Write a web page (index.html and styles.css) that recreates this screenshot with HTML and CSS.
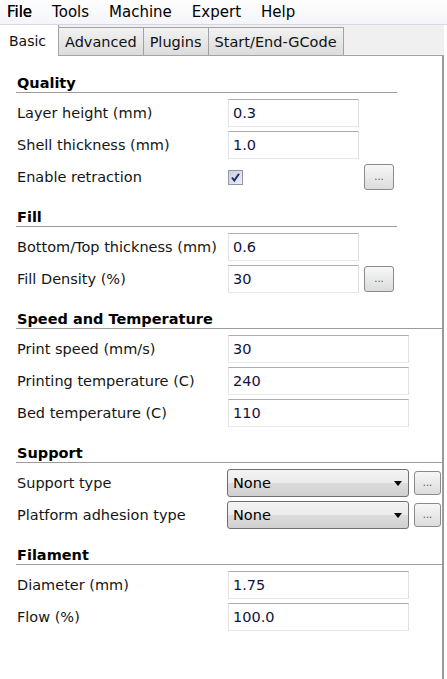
FILE: index.html
```html
<!DOCTYPE html>
<html>
<head>
<meta charset="utf-8">
<link rel="stylesheet" href="styles.css">
</head>
<body>
<div class="menubar">
  <span class="menu-item">File</span>
  <span class="menu-item">Tools</span>
  <span class="menu-item">Machine</span>
  <span class="menu-item">Expert</span>
  <span class="menu-item">Help</span>
</div>
<div class="tabstrip">
  <div class="tab active">Basic</div>
  <div class="tab">Advanced</div>
  <div class="tab">Plugins</div>
  <div class="tab">Start/End-GCode</div>
</div>
<div class="panel">
  <div class="section-head short"><span>Quality</span></div>
  <div class="rows">
    <div class="row"><span class="label">Layer height (mm)</span><div class="field narrow">0.3</div></div>
    <div class="row"><span class="label">Shell thickness (mm)</span><div class="field narrow">1.0</div></div>
    <div class="row"><span class="label">Enable retraction</span>
      <div class="check-cell">
        <svg class="checkbox" width="15" height="15" viewBox="0 0 15 15"><defs><linearGradient id="cb" x1="0" y1="0" x2="1" y2="1"><stop offset="0" stop-color="#c9cfdd"/><stop offset="1" stop-color="#eef0f6"/></linearGradient></defs><rect x="0.5" y="0.5" width="14" height="14" fill="url(#cb)" stroke="#8e96a8"/><path d="M4 7.5 L6.3 10.5 L11 3.8" fill="none" stroke="#1f2e6e" stroke-width="2"/></svg>
      </div>
      <div class="dots">...</div>
    </div>
  </div>

  <div class="section-head short"><span>Fill</span></div>
  <div class="rows">
    <div class="row"><span class="label">Bottom/Top thickness (mm)</span><div class="field narrow">0.6</div></div>
    <div class="row"><span class="label">Fill Density (%)</span><div class="field narrow">30</div><div class="dots">...</div></div>
  </div>

  <div class="section-head"><span>Speed and Temperature</span></div>
  <div class="rows">
    <div class="row"><span class="label">Print speed (mm/s)</span><div class="field wide">30</div></div>
    <div class="row"><span class="label">Printing temperature (C)</span><div class="field wide">240</div></div>
    <div class="row"><span class="label">Bed temperature (C)</span><div class="field wide">110</div></div>
  </div>

  <div class="section-head"><span>Support</span></div>
  <div class="rows">
    <div class="row"><span class="label">Support type</span><div class="select"><span>None</span><span class="arrow"></span></div><div class="dots small">...</div></div>
    <div class="row"><span class="label">Platform adhesion type</span><div class="select"><span>None</span><span class="arrow"></span></div><div class="dots small">...</div></div>
  </div>

  <div class="section-head"><span>Filament</span></div>
  <div class="rows">
    <div class="row"><span class="label">Diameter (mm)</span><div class="field wide">1.75</div></div>
    <div class="row"><span class="label">Flow (%)</span><div class="field wide">100.0</div></div>
  </div>
</div>
</body>
</html>
```

FILE: styles.css
```css
* { box-sizing: border-box; }
html, body {
  margin: 0;
  padding: 0;
}
body {
  width: 447px;
  height: 679px;
  overflow: hidden;
  background: #ffffff;
  font-family: "DejaVu Sans", sans-serif;
  font-size: 14.5px;
  color: #151515;
}
.menubar {
  height: 25px;
  display: flex;
  align-items: center;
  gap: 20px;
  padding-left: 7px;
  background: linear-gradient(#fefefe, #f4f5f9);
  border-bottom: 1px solid #d6d8e8;
  font-size: 15px;
  color: #000;
}
.menu-item:first-child {
  text-shadow: 0 0 0.6px #000;
}
.tabstrip {
  height: 31px;
  width: 444px;
  display: flex;
  align-items: flex-end;
  background: #f0f0f0;
  border-bottom: 1px solid #a3a3a3;
}
.tab {
  height: 28px;
  padding: 0 6px;
  display: flex;
  align-items: center;
  font-size: 14.5px;
  color: #111;
  background: linear-gradient(#f2f2f2, #dcdcdc);
  border: 1px solid #a3a3a3;
  border-bottom: none;
  margin-left: -1px;
}
.tab.active {
  height: 31px;
  margin-bottom: -1px;
  margin-left: 0;
  width: 59px;
  padding-left: 9px;
  font-size: 14px;
  background: #ffffff;
  border: none;
  border-right: 1px solid #a3a3a3;
}
.panel {
  width: 444px;
  height: 623px;
  border-right: 2px solid #9a9a9a;
  padding-top: 3px;
}
.section-head {
  height: 34px;
  margin-left: 16px;
  padding-left: 1px;
  display: flex;
  align-items: flex-end;
  border-bottom: 1px solid #9c9c9c;
  font-weight: bold;
  color: #000;
  line-height: 17px;
}
.section-head span {
  display: block;
  height: 17px;
}
.section-head.short {
  width: 381px;
}
.rows {
  margin-top: 4px;
}
.row {
  height: 32px;
  display: flex;
  align-items: center;
  padding-left: 17px;
}
.label {
  width: 211px;
  flex: none;
  white-space: nowrap;
}
.field {
  height: 28px;
  display: flex;
  align-items: center;
  padding-left: 4px;
  color: #12123a;
  border: 1px solid;
  border-color: #abadb3 #dbdfe6 #e3e9ef #e2e3ea;
  background: #fff;
}
.field.narrow { width: 131px; }
.field.wide { width: 181px; }
.check-cell {
  width: 131px;
  display: flex;
  align-items: center;
}
.checkbox {
  display: block;
  margin-left: 0;
}
.dots {
  width: 30px;
  height: 26px;
  margin-left: 5px;
  border: 1px solid #8a8a8a;
  border-radius: 3px;
  background: linear-gradient(#f7f7f7, #dcdcdc);
  display: flex;
  align-items: center;
  justify-content: center;
  font-size: 10px;
  color: #555;
  padding-bottom: 2px;
}
.dots.small {
  width: 27px;
  height: 24px;
}
.select {
  width: 182px;
  height: 28px;
  margin-left: -1px;
  display: flex;
  align-items: center;
  justify-content: space-between;
  padding: 0 6px 0 5px;
  border: 1px solid #707070;
  border-radius: 3px;
  background: linear-gradient(#f3f3f3 0%, #ebebeb 50%, #dcdcdc 51%, #d0d0d0 100%);
  color: #000;
}
.arrow {
  width: 0;
  height: 0;
  border-left: 4px solid transparent;
  border-right: 4px solid transparent;
  border-top: 5px solid #000;
}
```
